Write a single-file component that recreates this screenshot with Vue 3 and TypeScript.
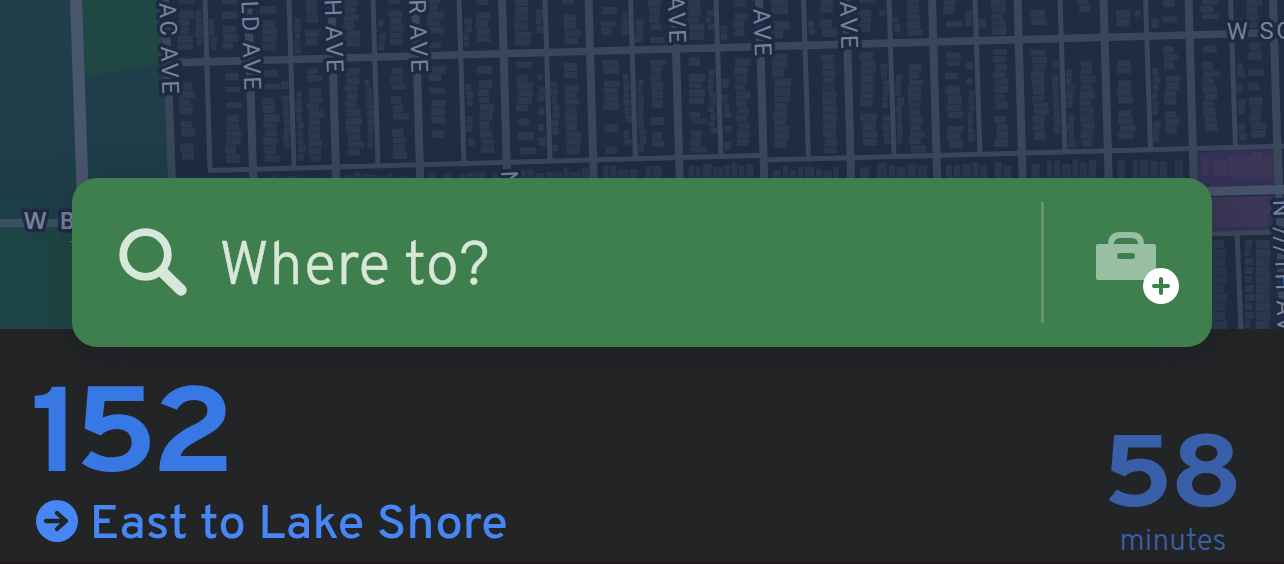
<script setup lang="ts">
type Road = { x1: number; y1: number; x2: number; y2: number; w: number }
type Label = { x: number; y: number; text: string; length: number }
type Building = { x: number; y: number; w: number; h: number; tone: number }

const majorTops = [165, 248, 331, 415, 502, 588.5, 674.5, 759, 846, 932, 1017.5, 1103.5, 1188.5, 1273]
const minorTops = [205, 289, 373, 459, 545, 630.5, 716, 803.5, 889, 975, 1060, 1145.5, 1230.5]

function lowerStreetY(x: number): number {
  return x < 766 ? 170.5 - (x - 210) * 0.0275 : 160 - (x - 766) * 0.0265
}

function upperStreetY(x: number): number {
  return 62.5 - (x - 180) * 0.0272
}

const roads: Road[] = [
  ...majorTops.map((x) => ({ x1: x, y1: -2, x2: x + (x === 165 ? 7 : 5.2), y2: 180, w: 8 })),
  ...minorTops.map((x) => ({ x1: x, y1: -2, x2: x + 5, y2: lowerStreetY(x), w: 5 })),
  { x1: 176, y1: 62.6, x2: 1290, y2: 32.2, w: 7.6 },
  { x1: 208, y1: 170.5, x2: 766, y2: 155.2, w: 5 },
  { x1: 766, y1: 160, x2: 1290, y2: 146, w: 5 },
]

const streetLabels: Label[] = [
  { x: 162.5, y: 94, text: 'AC AVE', length: 91 },
  { x: 244.5, y: 90, text: 'LD AVE', length: 89 },
  { x: 327, y: 72.5, text: 'H AVE', length: 73 },
  { x: 411.5, y: 72.5, text: 'R AVE', length: 73 },
  { x: 669.5, y: 43, text: 'AVE', length: 47 },
  { x: 755, y: 56, text: 'AVE', length: 47 },
  { x: 841.5, y: 48.5, text: 'AVE', length: 47 },
]

let seed = 41
function random(): number {
  seed = (seed * 16807) % 2147483647
  return seed / 2147483647
}

function fillColumn(left: number, right: number, from: number, to: number, list: Building[]): void {
  let y = from + 3 + random() * 4
  while (y < to - 5) {
    const h = 5.5 + random() * 3.2
    const w = (right - left) * (0.72 + random() * 0.4)
    if (random() > 0.07 && y + h < to - 1) {
      list.push({
        x: left + (y * 5) / 180 + random() * 2.5,
        y,
        w,
        h,
        tone: random() > 0.96 ? 1 : 0,
      })
    }
    y += h + 0.7 + (random() > 0.88 ? 6 : 0)
  }
}

const buildings: Building[] = []
for (let i = 0; i < minorTops.length; i++) {
  const a = majorTops[i]
  const m = minorTops[i]
  const b = majorTops[i + 1]
  const top = upperStreetY(m)
  const low = lowerStreetY(m)
  for (const [from, to] of [[-6, top - 5], [top + 5, low - 3]]) {
    fillColumn(a + 11, a + 26, from, to, buildings)
    fillColumn(b - 27, b - 13, from, to, buildings)
    if (random() > 0.3) fillColumn(m + 3, m + 10, from + 20, to, buildings)
    if (random() > 0.5) fillColumn(m - 11, m - 4, from + 12, to - 8, buildings)
  }
  let x = a + 14
  while (x < b - 6) {
    const w = 5 + random() * 5
    const y = low + 6 + random() * 6
    buildings.push({ x, y, w, h: Math.max(0, 178 - y), tone: 0 })
    x += w + 1.5 + (random() > 0.8 ? 6 : 0)
  }
}
for (let row = 0; row < 10; row++) {
  buildings.push({ x: 1211, y: 240 + row * 9, w: 13 + random() * 3, h: 8.4, tone: 0 })
  buildings.push({ x: 1245, y: 240 + row * 9, w: 5 + random() * 5, h: 7, tone: 0 })
  buildings.push({ x: 1256, y: 240 + row * 9, w: 13 + random() * 2, h: 8.4, tone: 0 })
}

const heading = 'East to Lake Shore'
const minutes = 58
</script>

<template>
  <main class="screen">
    <svg class="map" width="1284" height="329" viewBox="0 0 1284 329" aria-hidden="true">
      <defs>
        <linearGradient id="water" x1="0" y1="0" x2="0" y2="1">
          <stop offset="0" stop-color="#1f404b" />
          <stop offset="0.6" stop-color="#1d3e48" />
          <stop offset="1" stop-color="#1d4744" />
        </linearGradient>
      </defs>
      <rect width="1284" height="329" fill="#202c41" />
      <path d="M0 0H165L172 180V329H0Z" fill="url(#water)" />
      <path d="M80 0H162L165 64L84 76Z" fill="#1f4845" />
      <path d="M0 224H74V329H0Z" fill="#1e4545" />
      <rect
        v-for="(b, i) in buildings"
        :key="'b' + i"
        :x="b.x"
        :y="b.y"
        :width="b.w"
        :height="b.h"
        :fill="b.tone ? '#293652' : '#2b384e'"
      />
      <path d="M1197 152L1275 149V187L1197 190Z M1204 198L1273 195V230L1204 232Z" fill="#343156" />
      <path d="M1202 158h7v18h-7z M1213 160h15v16h-15z M1229 156h22v-4h11v5h10v20h-43z M1212 197h60v16h-5v14h-55z" fill="#3c3657" />
      <g stroke="#3a475b" fill="none">
        <line v-for="(r, i) in roads" :key="'r' + i" :x1="r.x1" :y1="r.y1" :x2="r.x2" :y2="r.y2" :stroke-width="r.w" />
        <path d="M1200 234.500L1272 232" stroke-width="5" />
        <path d="M1237 234L1241 329" stroke-width="5" />
        <path d="M1278 150L1283 329" stroke-width="8" />
      </g>
      <path d="M1190 192L1284 189.500" stroke="#46546b" stroke-width="9" />
      <path d="M76 -2L82.500 190" stroke="#4a556e" stroke-width="12" />
      <path d="M0 223H76" stroke="#3b4f62" stroke-width="8" />
      <g class="label">
        <text
          v-for="(l, i) in streetLabels"
          :key="'l' + i"
          :transform="`translate(${l.x} ${l.y}) rotate(88)`"
          text-anchor="end"
          :textLength="l.length"
        >{{ l.text }}</text>
        <text transform="translate(501 171) rotate(88)">N</text>
        <text x="1227" y="39.5" textLength="84" transform="rotate(-1 1227 39)">W SOU</text>
        <text transform="translate(1273 200) rotate(88)" textLength="132">N ///TH AV</text>
        <text class="label-strong" x="24" y="228.5" textLength="51">W B</text>
      </g>
      <path d="M69 241h5v3z" fill="#587080" />
    </svg>

    <section class="search">
      <svg class="magnifier" width="72" height="72" viewBox="0 0 72 72" aria-hidden="true">
        <path d="M46 44.500L65 63" stroke="#d7e7da" stroke-width="11.500" stroke-linecap="round" />
        <circle cx="29.500" cy="27.500" r="22.300" fill="#3f7e4d" stroke="#d7e7da" stroke-width="7.800" />
      </svg>
      <svg class="prompt" width="280" height="80" viewBox="0 0 280 80">
        <text x="-2" y="60.5" textLength="271" lengthAdjust="spacingAndGlyphs">Where to?</text>
      </svg>
      <div class="divider"></div>
      <svg class="shortcut" width="90" height="80" viewBox="0 0 90 80" aria-hidden="true">
        <path d="M15 19V14.500Q15 5 24.500 5H35.500Q45 5 45 14.500V19" fill="none" stroke="#99bfa2" stroke-width="6" />
        <path
          fill-rule="evenodd"
          d="M2 14H58Q60 14 60 16V48Q60 50 58 50H2Q0 50 0 48V16Q0 14 2 14Z M24 23A3 3 0 0 0 24 29H36A3 3 0 0 0 36 23Z"
          fill="#99bfa2"
        />
        <circle cx="65" cy="56" r="18" fill="#fff" />
        <path d="M58 56H72M65 49V63" stroke="#39804a" stroke-width="4" stroke-linecap="round" />
      </svg>
    </section>

    <section class="departure">
      <div class="line">
        <svg class="route" width="210" height="100" viewBox="0 0 210 100">
          <text transform="scale(1.08 1)" x="-1.7" y="91">1</text>
          <text transform="scale(1.165 1)" x="35.5 101.5" y="91">52</text>
        </svg>
        <div class="direction">
          <svg width="42" height="42" viewBox="0 0 42 42" aria-hidden="true">
            <circle cx="21" cy="21" r="21" fill="#4786f5" />
            <path d="M10 21H30M21 13L30 21L21 29" fill="none" stroke="#222426" stroke-width="4.3" stroke-linecap="round" stroke-linejoin="round" />
          </svg>
          <svg class="heading" width="430" height="60" viewBox="0 0 430 60">
            <text x="-1.5" y="47" textLength="418.5" lengthAdjust="spacingAndGlyphs">{{ heading }}</text>
          </svg>
        </div>
      </div>
      <svg class="eta" width="144" height="136" viewBox="0 0 144 136">
        <text class="eta-value" transform="scale(1.165 1)" x="3 61" y="85">{{ minutes }}</text>
        <text class="eta-unit" x="21.5" y="129" textLength="107" lengthAdjust="spacingAndGlyphs">minutes</text>
      </svg>
    </section>
  </main>
</template>

<style>
body {
  background: #222426;
}
</style>

<style scoped>
.screen {
  position: relative;
  box-sizing: border-box;
  width: 1284px;
  height: 564px;
  overflow: hidden;
  border-bottom: 2px solid #1e191c;
  background: #222426;
  font-family: "Noto Sans", "Open Sans", sans-serif;
}

.screen svg {
  display: block;
  flex: none;
}

.label {
  font: 400 23.5px Roboto, sans-serif;
  fill: #75829b;
  stroke: #202942;
  stroke-width: 7px;
  stroke-linejoin: round;
  paint-order: stroke;
}

.label-strong {
  font-weight: 600;
  font-family: "Noto Sans", sans-serif;
}

.search {
  position: absolute;
  top: 178px;
  left: 72px;
  display: flex;
  align-items: center;
  box-sizing: border-box;
  width: 1140px;
  height: 169px;
  padding-left: 44px;
  border-radius: 25px;
  background: #3f7e4d;
  box-shadow: 0 6px 36px rgba(25, 28, 32, 0.25);
}

.prompt {
  margin-left: 33px;
  overflow: visible;
}

.prompt text {
  font: 300 61px Overpass, "Noto Sans CJK SC", sans-serif;
  fill: #d7e7da;
  stroke: #d7e7da;
  stroke-width: 0.4px;
}

.divider {
  width: 3px;
  height: 121px;
  margin-left: 540px;
  background: #629570;
}

.shortcut {
  margin-left: 52px;
  margin-top: 15px;
}

.departure {
  display: flex;
  justify-content: space-between;
  padding: 51px 42px 0 32px;
}

.route text {
  font: 700 120px Overpass, "Noto Sans", sans-serif;
  fill: #3878e5;
}

.direction {
  display: flex;
  align-items: center;
  gap: 13px;
  margin-top: 11px;
  margin-left: 4px;
}

.heading text {
  font: 500 48px Overpass, "Noto Sans CJK SC", sans-serif;
  fill: #4786f5;
}

.eta {
  margin-top: 41px;
}

.eta-value {
  font: 700 102px Overpass, "Noto Sans", sans-serif;
  fill: #385fa7;
}

.eta-unit {
  font: 300 31px Overpass, "Noto Sans CJK SC", sans-serif;
  fill: #385fa7;
}
</style>
